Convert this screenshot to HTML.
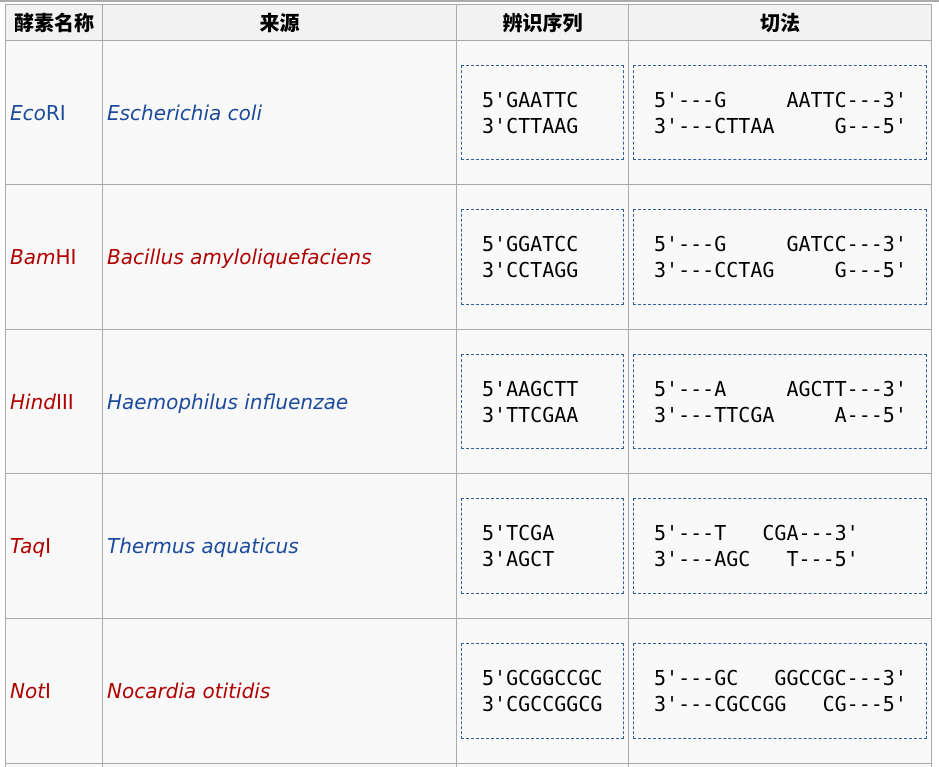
<!DOCTYPE html>
<html style="height:767px;overflow:hidden"><head><meta charset="utf-8"><style>
body{margin:0;width:939px;height:767px;background:#fff;overflow:hidden;position:relative;font-family:"DejaVu Sans","Noto Sans CJK SC",sans-serif}
.topline{position:absolute;left:0;top:0;width:939px;height:2px;background:#aaa}
.c{position:absolute;box-sizing:border-box;border:1px solid #aaa;background:#f9f9f9}
.h{background:#f2f2f2;font-weight:900;font-size:20px;text-align:center;line-height:33px;color:#000;font-family:"Noto Sans CJK SC","WenQuanYi Zen Hei",sans-serif}
.t{display:flex;align-items:center;font-size:20px;padding-left:4px}
.t i{font-style:italic}
.b{color:#1c4a9c}.r{color:#b00000}
.box{position:absolute;box-sizing:border-box;border:1px dashed #2f5f9f;background:#f9f9f9;font-family:"DejaVu Sans Mono",monospace;font-size:20px;line-height:26px;white-space:pre;color:#000;padding:21px 0 0 20px}
</style></head><body>
<div class="topline"></div>
<div class="c h" style="left:5px;top:4px;width:98px;height:37px">酵素名称</div>
<div class="c h" style="left:102px;top:4px;width:355px;height:37px">来源</div>
<div class="c h" style="left:456px;top:4px;width:173px;height:37px">辨识序列</div>
<div class="c h" style="left:628px;top:4px;width:304px;height:37px">切法</div>

<div class="c t b" style="left:5px;top:40px;width:98px;height:145px"><span><i>Eco</i>RI</span></div>
<div class="c t b" style="left:102px;top:40px;width:355px;height:145px"><i>Escherichia coli</i></div>
<div class="c" style="left:456px;top:40px;width:173px;height:145px"></div>
<div class="c" style="left:628px;top:40px;width:304px;height:145px"></div>
<div class="box" style="left:461px;top:65px;width:163px;height:95px">5'GAATTC
3'CTTAAG</div>
<div class="box" style="left:633px;top:65px;width:294px;height:95px">5'---G     AATTC---3'
3'---CTTAA     G---5'</div>

<div class="c t r" style="left:5px;top:184px;width:98px;height:146px"><span><i>Bam</i>HI</span></div>
<div class="c t r" style="left:102px;top:184px;width:355px;height:146px"><i>Bacillus amyloliquefaciens</i></div>
<div class="c" style="left:456px;top:184px;width:173px;height:146px"></div>
<div class="c" style="left:628px;top:184px;width:304px;height:146px"></div>
<div class="box" style="left:461px;top:209px;width:163px;height:96px">5'GGATCC
3'CCTAGG</div>
<div class="box" style="left:633px;top:209px;width:294px;height:96px">5'---G     GATCC---3'
3'---CCTAG     G---5'</div>

<div class="c t r" style="left:5px;top:329px;width:98px;height:145px"><span><i>Hind</i>III</span></div>
<div class="c t b" style="left:102px;top:329px;width:355px;height:145px"><i>Haemophilus influenzae</i></div>
<div class="c" style="left:456px;top:329px;width:173px;height:145px"></div>
<div class="c" style="left:628px;top:329px;width:304px;height:145px"></div>
<div class="box" style="left:461px;top:354px;width:163px;height:95px">5'AAGCTT
3'TTCGAA</div>
<div class="box" style="left:633px;top:354px;width:294px;height:95px">5'---A     AGCTT---3'
3'---TTCGA     A---5'</div>

<div class="c t r" style="left:5px;top:473px;width:98px;height:146px"><span><i>Taq</i>I</span></div>
<div class="c t b" style="left:102px;top:473px;width:355px;height:146px"><i>Thermus aquaticus</i></div>
<div class="c" style="left:456px;top:473px;width:173px;height:146px"></div>
<div class="c" style="left:628px;top:473px;width:304px;height:146px"></div>
<div class="box" style="left:461px;top:498px;width:163px;height:96px">5'TCGA
3'AGCT</div>
<div class="box" style="left:633px;top:498px;width:294px;height:96px">5'---T   CGA---3'
3'---AGC   T---5'</div>

<div class="c t r" style="left:5px;top:618px;width:98px;height:146px"><span><i>Not</i>I</span></div>
<div class="c t r" style="left:102px;top:618px;width:355px;height:146px"><i>Nocardia otitidis</i></div>
<div class="c" style="left:456px;top:618px;width:173px;height:146px"></div>
<div class="c" style="left:628px;top:618px;width:304px;height:146px"></div>
<div class="box" style="left:461px;top:643px;width:163px;height:96px">5'GCGGCCGC
3'CGCCGGCG</div>
<div class="box" style="left:633px;top:643px;width:294px;height:96px">5'---GC   GGCCGC---3'
3'---CGCCGG   CG---5'</div>

<div class="c" style="left:5px;top:763px;width:98px;height:4px;border-bottom:0"></div>
<div class="c" style="left:102px;top:763px;width:355px;height:4px;border-bottom:0"></div>
<div class="c" style="left:456px;top:763px;width:173px;height:4px;border-bottom:0"></div>
<div class="c" style="left:628px;top:763px;width:304px;height:4px;border-bottom:0"></div>
</body></html>
